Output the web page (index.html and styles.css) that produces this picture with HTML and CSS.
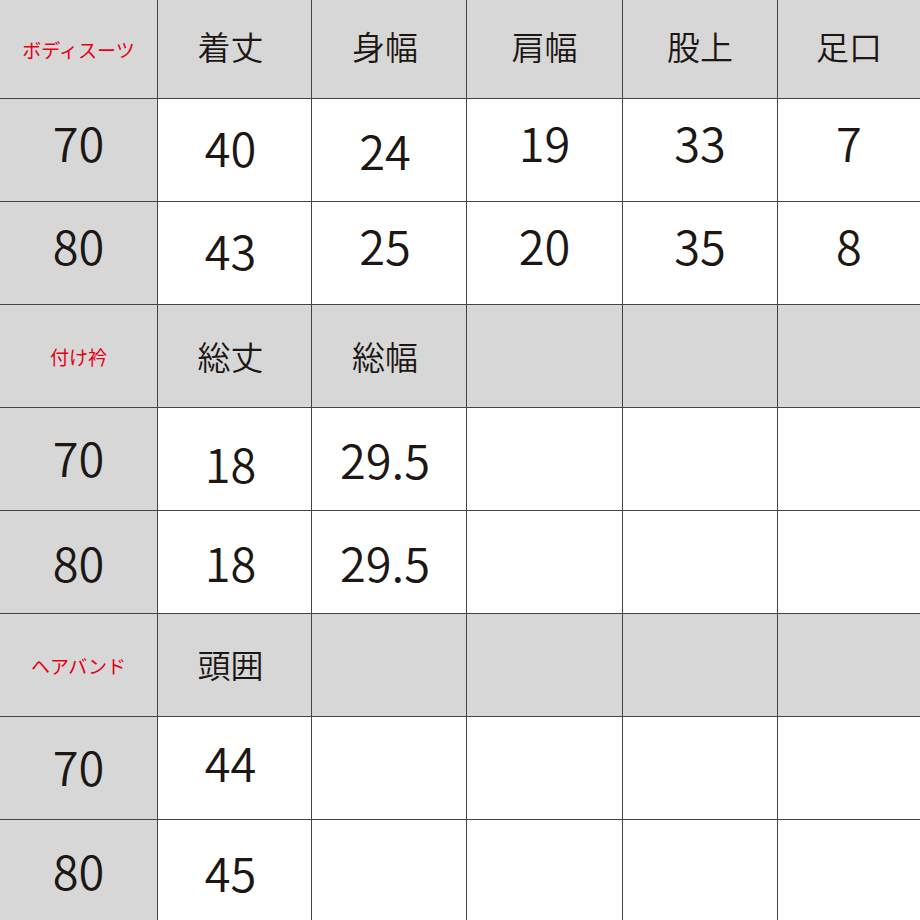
FILE: index.html
```html
<!DOCTYPE html>
<html lang="ja">
<head>
<meta charset="utf-8">
<title>サイズ表</title>
<link rel="stylesheet" href="styles.css">
</head>
<body>
<div class="sheet">
  <div class="cell g lbl">ボディスーツ</div>
  <div class="cell g hd sl u3">着丈</div>
  <div class="cell g hd sl u3">身幅</div>
  <div class="cell g hd u3">肩幅</div>
  <div class="cell g hd u3">股上</div>
  <div class="cell g hd u3">足口</div>

  <div class="cell g num u8">70</div>
  <div class="cell num sl u4">40</div>
  <div class="cell num sl u1">24</div>
  <div class="cell num u8">19</div>
  <div class="cell num u8">33</div>
  <div class="cell num u8">7</div>

  <div class="cell g num u8">80</div>
  <div class="cell num sl u4">43</div>
  <div class="cell num sl u8">25</div>
  <div class="cell num u8">20</div>
  <div class="cell num u8">35</div>
  <div class="cell num u8">8</div>

  <div class="cell g lbl">付け衿</div>
  <div class="cell g hd sl">総丈</div>
  <div class="cell g hd sl">総幅</div>
  <div class="cell g"></div>
  <div class="cell g"></div>
  <div class="cell g"></div>

  <div class="cell g num u3">70</div>
  <div class="cell num sl d3">18</div>
  <div class="cell num sl u1">29.5</div>
  <div class="cell"></div>
  <div class="cell"></div>
  <div class="cell"></div>

  <div class="cell g num u1">80</div>
  <div class="cell num sl u1">18</div>
  <div class="cell num sl u1">29.5</div>
  <div class="cell"></div>
  <div class="cell"></div>
  <div class="cell"></div>

  <div class="cell g lbl">ヘアバンド</div>
  <div class="cell g hd sl u1">頭囲</div>
  <div class="cell g"></div>
  <div class="cell g"></div>
  <div class="cell g"></div>
  <div class="cell g"></div>

  <div class="cell g num u3">70</div>
  <div class="cell num sl u6">44</div>
  <div class="cell"></div>
  <div class="cell"></div>
  <div class="cell"></div>
  <div class="cell"></div>

  <div class="cell g num u2">80</div>
  <div class="cell num sl">45</div>
  <div class="cell"></div>
  <div class="cell"></div>
  <div class="cell"></div>
  <div class="cell"></div>
</div>
</body>
</html>
```

FILE: styles.css
```css
html, body {
  margin: 0;
  padding: 0;
  background: #ffffff;
  overflow: hidden;
}

.sheet {
  width: 920px;
  height: 920px;
  overflow: hidden;
  display: grid;
  grid-template-columns: 157px 153px 154px 155px 154px 1fr;
  grid-template-rows: 98px repeat(8, 102px);
  gap: 1px;
  background: #444444;
  font-family: "Noto Sans CJK JP", "Noto Sans", sans-serif;
  color: #1c1714;
}

.cell {
  background: #ffffff;
  display: flex;
  align-items: center;
  justify-content: center;
  line-height: 1;
  box-sizing: border-box;
}

.g {
  background: #d7d7d7;
}

.lbl {
  color: #e50012;
  font-size: 19px;
}

.hd {
  font-size: 33px;
  font-weight: 350;
}

.num {
  font-size: 47px;
  font-weight: 350;
}

.sl {
  padding-right: 8px;
}

.u1 { padding-bottom: 2px; }
.u2 { padding-bottom: 4px; }
.u3 { padding-bottom: 6px; }
.u4 { padding-bottom: 8px; }
.u6 { padding-bottom: 13px; }
.u8 { padding-bottom: 17px; }
.d3 { padding-top: 7px; }
```
